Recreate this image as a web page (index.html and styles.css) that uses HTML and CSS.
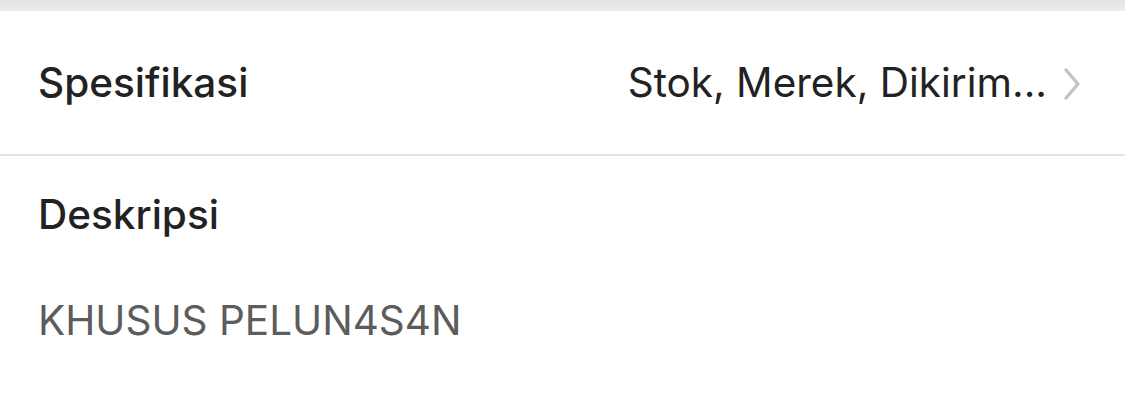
FILE: index.html
```html
<!DOCTYPE html>
<html>
<head>
<meta charset="utf-8">
<link rel="stylesheet" href="styles.css">
</head>
<body>
<div class="page">
  <div class="topband"></div>
  <div class="row spec">
    <span class="label">Spesifikasi</span>
    <span class="value">Stok, Merek, Dikirim...
      <svg class="chev" width="18" height="34" viewBox="0 0 18 34"><path d="M3 3 L15 17 L3 31" fill="none" stroke="#c4c4c4" stroke-width="3.4" stroke-linecap="round" stroke-linejoin="round"/></svg>
    </span>
  </div>
  <div class="desc">
    <div class="label">Deskripsi</div>
    <div class="text">KHUSUS PELUN4S4N</div>
  </div>
</div>
</body>
</html>
```
FILE: styles.css
```css
html, body { margin: 0; padding: 0; background: #fff; }
body { font-family: Inter, "Noto Sans", sans-serif; color: #222; }
.page { width: 1125px; height: 405px; overflow: hidden; }
.topband { height: 11px; background: linear-gradient(#e4e4e4, #ececec); }
.row { display: flex; align-items: center; justify-content: space-between; box-sizing: border-box; height: 145px; padding: 2px 44px 0 38px; border-bottom: 2px solid #e3e3e3; }
.label { font-size: 40.5px; font-weight: 450; color: #222; line-height: 1.2; }
.value { display: flex; align-items: center; gap: 16px; font-size: 40.5px; color: #222; line-height: 1.2; }
.chev { display: block; }
.desc { padding: 35px 38px 0; }
.desc .text { margin-top: 57px; font-size: 40.5px; color: #5c5c5c; line-height: 1.2; }
```
